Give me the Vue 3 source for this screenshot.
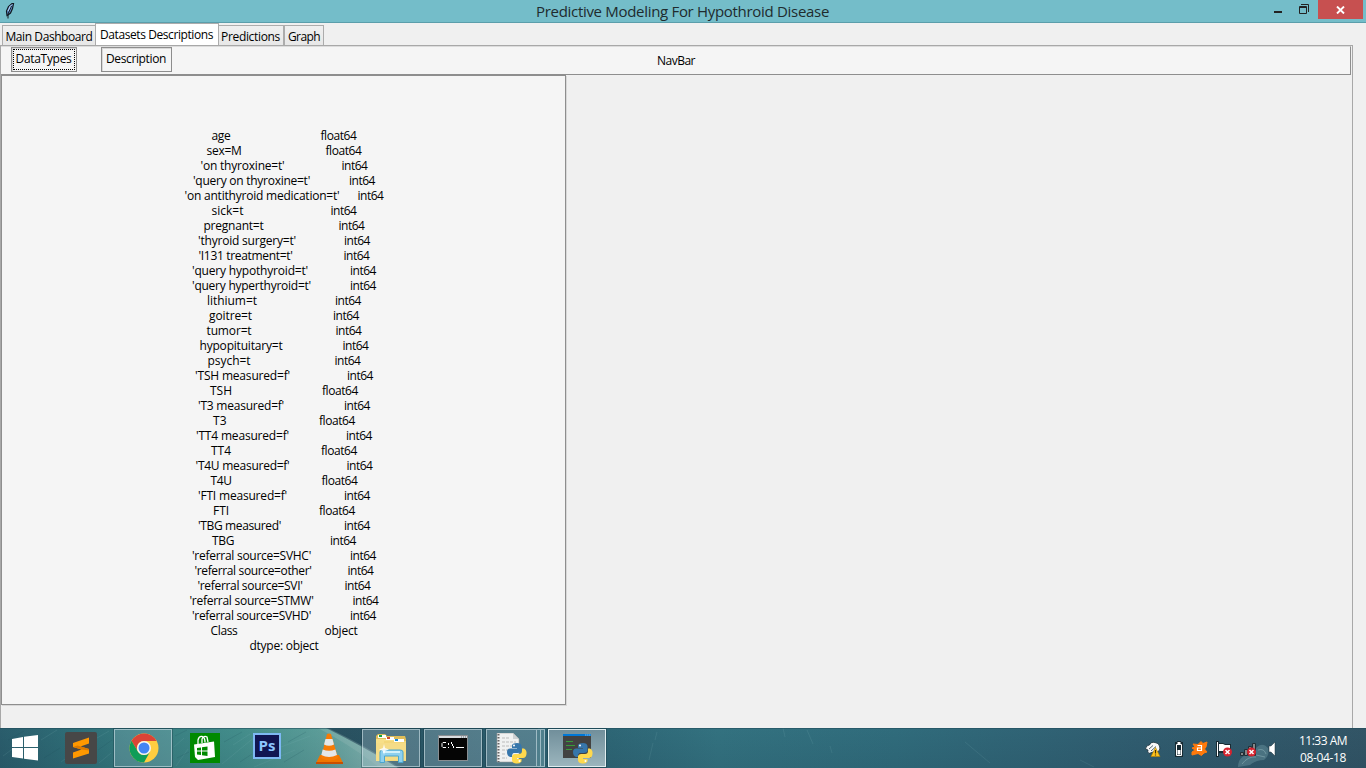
<script setup>
const rows = [
  ['age', 19, 90, 'float64'],
  ['sex=M', 35, 84, 'float64'],
  ["'on thyroxine=t'", 84, 57, 'int64'],
  ["'query on thyroxine=t'", 117, 39, 'int64'],
  ["'on antithyroid medication=t'", 155, 18, 'int64'],
  ['sick=t', 32, 87, 'int64'],
  ['pregnant=t', 60, 75, 'int64'],
  ["'thyroid surgery=t'", 98, 48, 'int64'],
  ["'I131 treatment=t'", 94, 51, 'int64'],
  ["'query hypothyroid=t'", 116, 42, 'int64'],
  ["'query hyperthyroid=t'", 119, 39, 'int64'],
  ['lithium=t', 50, 78, 'int64'],
  ['goitre=t', 43, 81, 'int64'],
  ['tumor=t', 45, 84, 'int64'],
  ['hypopituitary=t', 83, 60, 'int64'],
  ['psych=t', 43, 84, 'int64'],
  ["'TSH measured=f'", 95, 57, 'int64'],
  ['TSH', 22, 90, 'float64'],
  ["'T3 measured=f'", 86, 60, 'int64'],
  ['T3', 14, 92, 'float64'],
  ["'TT4 measured=f'", 93, 57, 'int64'],
  ['TT4', 20, 90, 'float64'],
  ["'T4U measured=f'", 94, 57, 'int64'],
  ['T4U', 21, 90, 'float64'],
  ["'FTI measured=f'", 89, 57, 'int64'],
  ['FTI', 16, 90, 'float64'],
  ["'TBG measured'", 83, 63, 'int64'],
  ['TBG', 22, 96, 'int64'],
  ["'referral source=SVHC'", 119, 39, 'int64'],
  ["'referral source=other'", 117, 36, 'int64'],
  ["'referral source=SVI'", 105, 42, 'int64'],
  ["'referral source=STMW'", 124, 39, 'int64'],
  ["'referral source=SVHD'", 119, 39, 'int64'],
  ['Class', 27, 87, 'object'],
]
const typeWidth = { int64: 26, float64: 36, object: 33 }

// Tightens letter spacing so a label fills exactly the given width.
const vFit = {
  mounted(el, { value }) {
    const natural = el.firstElementChild.getBoundingClientRect().width
    el.style.width = value + 'px'
    el.style.letterSpacing = (value - natural) / el.textContent.length + 'px'
  },
}
</script>

<template>
  <div class="screen">
    <header class="titlebar">
      <svg class="feather" width="12" height="18" viewBox="0 0 12 18">
        <path d="M3 13.500 2.500 9 4.500 4.500 8 1.500 9.500 1.500 8.500 6.500 6.500 11 4 13Z" fill="#5f91cf" stroke="#111820" stroke-width="1.200" />
        <path d="M4 16.500V12L7.500 4" fill="none" stroke="#111820" />
        <path d="M5.500 5 8 2.500M4 9 6 5" stroke="#b9d7f8" />
      </svg>
      <span v-fit="293" class="title fit"><b>Predictive Modeling For Hypothroid Disease</b></span>
      <div class="controls">
        <svg width="50" height="22" viewBox="0 0 50 22">
          <path d="M6 12h8" stroke="#222" stroke-width="2" />
          <path d="M33 4.500H40.500V12" fill="none" stroke="#222" />
          <path d="M31.500 6.500h7v7h-7zM31 7.500h8" fill="none" stroke="#222" />
        </svg>
        <div class="close">
          <svg width="9" height="8" viewBox="0 0 9 8"><path d="M1 .5 8 7.500M8 .5 1 7.500" stroke="#fff" stroke-width="1.900" /></svg>
        </div>
      </div>
    </header>

    <nav class="tabs">
      <div class="tab main"><span v-fit="87" class="fit"><b>Main Dashboard</b></span></div>
      <div class="tab active"><span v-fit="113" class="fit"><b>Datasets Descriptions</b></span></div>
      <div class="tab pred"><span v-fit="59" class="fit"><b>Predictions</b></span></div>
      <div class="tab graph"><span v-fit="32" class="fit"><b>Graph</b></span></div>
    </nav>

    <main class="notebook">
      <section class="navbar">
        <button class="btn types"><span class="focus"><span v-fit="56" class="fit"><b>DataTypes</b></span></span></button>
        <button class="btn desc"><span v-fit="60" class="fit"><b>Description</b></span></button>
        <span v-fit="38" class="fit navlabel"><b>NavBar</b></span>
      </section>
      <section class="panel">
        <div v-for="r in rows" :key="r[0]" class="row">
          <span v-fit="r[1]" class="fit"><b>{{ r[0] }}</b></span>
          <span v-fit="typeWidth[r[3]]" class="fit" :style="{ marginLeft: r[2] + 'px' }"><b>{{ r[3] }}</b></span>
        </div>
        <div class="row"><span v-fit="69" class="fit"><b>dtype: object</b></span></div>
      </section>
    </main>

    <footer class="taskbar">
      <svg class="wall" width="1366" height="40" viewBox="0 0 1366 40">
        <defs>
          <linearGradient id="sea" gradientUnits="userSpaceOnUse" x1="0" y1="0" x2="400" y2="0">
            <stop offset="0" stop-color="#2a5d6c" /><stop offset=".2" stop-color="#2f6f78" /><stop offset=".4" stop-color="#398082" /><stop offset=".6" stop-color="#438d8b" /><stop offset=".8" stop-color="#5c9d99" /><stop offset="1" stop-color="#8fbab7" />
          </linearGradient>
          <linearGradient id="deep">
            <stop offset="0" stop-color="#29505f" /><stop offset=".22" stop-color="#2b6070" /><stop offset=".38" stop-color="#337280" /><stop offset=".55" stop-color="#306c7c" /><stop offset=".78" stop-color="#305d70" /><stop offset="1" stop-color="#325566" />
          </linearGradient>
          <linearGradient id="shade" x2="0" y2="1"><stop offset="0" stop-color="#123" stop-opacity="0" /><stop offset="1" stop-color="#123" stop-opacity=".1" /></linearGradient>
        </defs>
        <rect width="1366" height="40" fill="#2b6070" />
        <rect x="320" width="1046" height="40" fill="url(#deep)" />
        <path d="M0 0H326Q370 22 398 40H0Z" fill="url(#sea)" />
        <path d="M318 0H328Q370 20 400 40H380Q352 18 318 0Z" fill="#a6c7c5" opacity=".25" />
        <g stroke="#8cc2c4" stroke-width=".7" opacity=".2">
          <path d="M3 28 22 14M41 12 57 2M61 34 95 8M99 35 111 25M97 10 109 3M176 38 188 21M174 19 184 10M222 36 256 8M233 17 250 6M254 39 295 22M281 19 310 8M653 15 649 32M655 12 657 4M783 0 785 9M807 2 813 16M830 18 832 25M965 14 990 35M1080 32 1094 39" />
        </g>
        <g stroke="#1d4f5c" stroke-width=".8" opacity=".22">
          <path d="M8 12 24 3M44 30 60 20M98 22 112 12M175 8 187 2M177 30 189 24M224 14 242 4M240 34 252 26M284 34 304 22M288 14 306 4" />
        </g>
        <rect width="1366" height="40" fill="url(#shade)" />
        <path d="M0 .5H1366" stroke="#214c5b" opacity=".55" />
        <path d="M1238 39Q1238 30 1246 27Q1252 26 1257 19Q1263 14 1268 20Q1270 27 1264 32Q1256 32 1250 37Z" fill="#8ab7bd" opacity=".3" />
        <path d="M1242 36Q1248 28 1256 29M1258 22Q1264 20 1266 26M1256 27 1265 29" fill="none" stroke="#b4d6d8" opacity=".35" />
      </svg>

      <div class="items">
        <div class="slot start">
          <svg width="27" height="26" viewBox="0 0 27 26"><path d="M0 4 11 2V12H0ZM12 1.800 26 0V12H12ZM0 13H11V23.500L0 22ZM12 13H26V25.500L12 23.700Z" fill="#fff" /></svg>
        </div>
        <div class="slot sublime">
          <svg width="32" height="32" viewBox="0 0 32 32"><rect width="32" height="32" rx="2" fill="#474747" /><path d="M8 11 24 5.500V11.500L15.500 14.500 24 17V21.500L8 26.500V20.500L16.500 17.500 8 15Z" fill="#ff9800" /><path d="M8 15 12.500 13.500 24 17V18.500L16.500 17.500Z" fill="#dc7a00" /></svg>
        </div>
        <div class="slot boxed chrome">
          <svg width="30" height="30" viewBox="0 0 30 30"><circle cx="15" cy="15" r="14.500" fill="#ffcd40" /><path d="M2.500 7.700A14.500 14.500 0 0 1 27.600 7.900H15A7 7 0 0 0 8.900 18.500Z" fill="#db4437" /><path d="M2.500 7.700A14.500 14.500 0 0 0 15 29.500L21.100 18.500A7 7 0 0 1 8.900 18.500Z" fill="#0f9d58" /><circle cx="15" cy="15" r="7" fill="#f5f5f5" /><circle cx="15" cy="15" r="5.500" fill="#4285f4" /></svg>
        </div>
        <div class="slot store">
          <svg width="30" height="30" viewBox="0 0 30 30"><rect width="30" height="30" fill="#008a00" /><path d="M4 11.500 24 8.500 25 24 8 27 5 24Z" fill="#fff" /><path d="M8 11V7Q9 3 12 3.500Q15 4 15 9.500M12 10V6Q14 2 17 4L18 9" fill="none" stroke="#fff" stroke-width="1.300" /><path d="M7 15 11 14.400V17.500H7ZM12 14.200 17.500 13.500V17.500H12ZM7 18.500H11V22L7 21.600ZM12 18.500H17.500V23L12 22.200Z" fill="#008a00" /></svg>
        </div>
        <div class="slot ps"><div class="psicon"><span v-fit="17" class="fit"><b>Ps</b></span></div></div>
        <div class="slot vlc">
          <svg width="27" height="31" viewBox="0 0 27 31"><path d="M4 22H23L27 30H0Z" fill="#ee7600" /><path d="M0 29H27V31H0Z" fill="#c94f00" /><path d="M11 1Q13 0 15 1L22 25Q14 30 5 25Z" fill="#f77b05" /><path d="M9.500 6H16.500L18 11.500Q13 14 8 11.500ZM6.700 16.500Q13 19 19.400 16.500L21 22Q13 26 5.300 22Z" fill="#e5e7e8" /></svg>
        </div>
        <div class="slot boxed explorer">
          <svg width="34" height="30" viewBox="0 0 34 30"><path d="M2 3 4 1H11L13 3H31L32 6V27H2Z" fill="#dfbd59" /><path d="M4 2H12V5H4Z" fill="#fff" /><path d="M5 2H8V4H5Z" fill="#12a53a" /><path d="M2 6H23V28H2Z" fill="#f7df88" /><path d="M12 4H20V7H12Z" fill="#fff" /><path d="M13 4H16V6H13Z" fill="#d44a2d" /><path d="M10 8H32V28H10Z" fill="#f3d779" /><path d="M20 6H30V9H20Z" fill="#fff" /><path d="M21 6H24V8H21Z" fill="#1689d5" /><path d="M2 10H32V27H2Z" fill="#f5dc87" /><path d="M6 19Q6 17 9 17H26Q29 17 29 19V29.500H24.500V23H10.500V29.500H6Z" fill="#8ed0ef" stroke="#4aa6cf" /><path d="M9 18H26V20H9Z" fill="#d3f1fb" /><path d="M10 11 11 15 15 16.500 11 18 10 22 9 18 5 16.500 9 15Z" fill="#fff" opacity=".85" /></svg>
        </div>
        <div class="slot boxed cmd">
          <svg width="30" height="26" viewBox="0 0 30 26"><rect x=".5" y=".5" width="29" height="25" fill="#050505" stroke="#888d91" /><path d="M1 2H29" stroke="#d9dcdf" stroke-width="2" /><path d="M23 2H28" stroke="#647481" stroke-dasharray="1 1" /><path d="M8 7.500H5L4 8.500V11.500L5 12.500H8M10.500 8V10M10.500 12V13M13.500 7V9M14.500 9V11M15.500 11V13M18 12.500H26" fill="none" stroke="#fff" /></svg>
        </div>
        <div class="slot boxed pyfile">
          <svg width="31" height="31" viewBox="0 0 31 31"><path d="M1 0H17L23 6V29H1Z" fill="#f0f1f1" stroke="#9a9a9a" stroke-width=".6" /><path d="M17 0V6H23" fill="#cdd1d3" /><path d="M2.500 1V29" stroke="#666" stroke-width="2" stroke-dasharray="1.500 1.500" /><path d="M6 5H14M6 9H20M6 13H19M6 17H12M6 21H10M6 25H11" stroke="#bbb" stroke-dasharray="3 1" /><g id="snake"><path d="M16 15V12Q17 10 21 10Q25 10 25.500 13V18Q25 20 22 20H18Q16 20 16 24H14Q11 23 11 19Q11 15 15 15.500H21V15Z" fill="#3776ab" /><path d="M26 15.500H28Q31 17 30.500 21Q30 25 27 25H21V26H25.500V28.500Q24 31 20 30.500Q16 30 16 27V23Q17 21 19 21H23Q26 21 26 18Z" fill="#ffd94d" /><circle cx="18" cy="12.500" r="1" fill="#fff" /><circle cx="23.500" cy="28" r="1" fill="#fff" /></g></svg>
        </div>
        <div class="stack"></div>
        <div class="stack"></div>
        <div class="slot boxed running">
          <svg width="31" height="31" viewBox="0 0 31 31"><rect x="1" y="1" width="28" height="24" fill="#424242" /><path d="M1 2H29" stroke="#0078d7" stroke-width="2" /><path d="M23 2H29" stroke="#3a9be8" stroke-width="2" stroke-dasharray="1.500 .5" /><path d="M4 8.500H11M4 12.500H13M4 16.500H10" stroke="#379b38" /><use href="#snake" /></svg>
        </div>
      </div>

      <svg class="tray" width="140" height="24" viewBox="0 0 140 24">
        <path d="M2.500 11Q3 7 6.500 7Q8 3.500 12 4.500Q16 5 16.500 8Q18 11 15 14H10L6 15.500Q4 14 5 12Z" fill="#f8f8f8" stroke="#192f39" stroke-width=".8" /><path d="M6 11 10 7.500M8 13 13 8.500" stroke="#52666d" /><path d="M12.500 9.500 17 18.500H8Z" fill="#ffc21b" stroke="#b68000" stroke-width=".6" /><path d="M12.500 12V15.500M12.500 16.500V17.500" stroke="#402f0a" stroke-width="1.200" />
        <path d="M34 3H38V4H40V19H32V4H34Z" fill="#172b33" /><path d="M33.500 6.500H38.500V17.500H33.500Z" fill="none" stroke="#fff" /><path d="M34.500 4H37.500V6H34.500ZM34.500 12H37.500V16.500H34.500Z" fill="#fff" />
        <path d="M50 6 55 6.500 58 3.500 60 5.500 64 4 63 9 61.500 11 64 14 61 15 58.500 17.500 55 15.500 49 17 49 14 52 12 49 10 52 9Z" fill="#ff7a0c" stroke="#ff7a0c" stroke-linejoin="round" /><path d="M54.500 7.500H58.500V12.500H54.500V10H58" fill="none" stroke="#fff" stroke-width="1.200" />
        <path d="M73 3H76V5H80L82 6H88V15H76V19H73Z" fill="#172b33" /><path d="M74.500 4V18" stroke="#fff" /><path d="M76 6H80L82 7H87V13H76Z" fill="#fff" /><circle cx="84.500" cy="14" r="4.500" fill="#d6232f" /><path d="M82.500 12 86.500 16M86.500 12 82.500 16" stroke="#fff" stroke-width="1.500" />
        <path d="M97.500 14.500H100.500V17.500H97.500ZM101.500 11.500H104.500V17.500H101.500ZM105.500 8.500H108.500V17.500H105.500ZM109.500 5.500H112.500V17.500H109.500Z" fill="#858789" stroke="#202f36" /><circle cx="108.500" cy="14" r="4.500" fill="#d6232f" /><path d="M106.500 12 110.500 16M110.500 12 106.500 16" stroke="#fff" stroke-width="1.500" />
        <path d="M126 8H128L132 4V18L128 14H126Z" fill="#fff" stroke="#20323a" stroke-width=".5" />
      </svg>
      <div class="clock"><span v-fit="48" class="fit"><b>11:33 AM</b></span><span v-fit="46" class="fit"><b>08-04-18</b></span></div>
    </footer>
  </div>
</template>

<style>
body { margin: 0; overflow: hidden; }
</style>

<style scoped>
* { box-sizing: border-box; }
.screen { width: 1366px; height: 768px; display: flex; flex-direction: column; background: #f0f0f0; font-family: "Open Sans", "Noto Sans", sans-serif; font-size: 12px; line-height: 15px; color: #000; }
.fit { display: inline-block; white-space: nowrap; flex: none; }
.fit b { font-weight: 400; }
.titlebar { position: relative; height: 23px; flex: none; background: #74bdc9; border-bottom: 1px solid #5b9eab; display: flex; justify-content: center; }
.feather { position: absolute; left: 4px; top: 2px; }
.title { font-size: 15px; line-height: 22px; color: #202b2e; align-self: flex-start; margin-left: -1px; }
.controls { position: absolute; right: 3px; top: 0; display: flex; }
.close { width: 45px; height: 19px; background: #c75050; display: flex; align-items: center; justify-content: center; }
.tabs { height: 22px; flex: none; display: flex; align-items: flex-end; padding-left: 2px; }
.tab { height: 20px; border: 1px solid #acacac; border-bottom: 0; background: linear-gradient(#f0f0f0, #e7e7e7); display: flex; justify-content: center; padding-top: 3px; }
.tab.main { width: 93px; border-right: 0; }
.tab.active { width: 124px; height: 22px; background: #fff; padding-right: 1px; }
.tab.pred { width: 65px; border-left: 0; padding-right: 1px; }
.tab.graph { width: 40px; }
.notebook { width: 1353px; height: 683px; border: 1px solid #a8a8a8; border-bottom: 0; background: #f0f0f0; }
.navbar { height: 29px; width: 1350px; background: #f5f5f5; border-top: 1px solid #dcdcdc; border-right: 1px solid #8e8e8e; border-bottom: 1px solid #8e8e8e; display: flex; position: relative; }
.btn { height: 25px; border: 1px solid #8d8d8d; background: #f5f5f5; box-shadow: inset 1px 1px #d8d8d8; font: inherit; padding: 0; display: flex; align-items: center; justify-content: center; }
.types { width: 66px; margin-left: 10px; }
.desc { width: 71px; margin-left: 24px; padding: 0 1px 2px 0; }
.focus { border: 1px dotted #000; width: 62px; height: 21px; display: flex; justify-content: center; line-height: 17px; padding-right: 1px; }
.navlabel { margin-left: 485px; margin-top: 6px; }
.panel { width: 565px; height: 630px; background: #f5f5f5; border: 1px solid #8e8e8e; box-shadow: 1px 1px #d8d8d8; padding-top: 52px; padding-left: 1px; }
.row { height: 15px; display: flex; justify-content: center; }
.taskbar { position: relative; height: 40px; flex: none; overflow: hidden; }
.wall { position: absolute; left: 0; top: 0; }
.items { position: relative; display: flex; align-items: stretch; height: 40px; }
.slot { display: flex; align-items: center; justify-content: center; flex: none; }
.boxed { height: 38px; margin-top: 1px; border: 1px solid rgba(205, 225, 230, .62); background: rgba(190, 213, 223, .28); outline: 1px solid rgba(20, 55, 67, .35); }
.start { width: 50px; padding-bottom: 1px; }
.sublime { width: 62px; }
.chrome { width: 58px; margin-left: 2px; padding-left: 1px; background: rgba(190, 213, 223, .2); }
.store { width: 65px; }
.ps { width: 60px; padding-bottom: 4px; }
.psicon { width: 28px; height: 26px; border: 2px solid #7db8f4; background: #101552; color: #8cc6ff; font-size: 15px; line-height: 21px; display: flex; justify-content: center; }
.psicon b { font-weight: 700; }
.vlc { width: 65px; }
.explorer { width: 58px; }
.cmd { width: 58px; margin-left: 4px; }
.pyfile { width: 51px; margin-left: 4px; }
.stack { width: 4px; height: 38px; margin-top: 1px; border: 1px solid rgba(205, 225, 230, .62); border-left: 0; background: #4f7f8c; }
.running { width: 58px; margin-left: 3px; border-color: #e0edef; background: linear-gradient(#718f9b, #9bb5bd); }
.tray { position: absolute; left: 1143px; top: 10px; }
.clock { position: absolute; right: 18px; top: 4px; width: 50px; height: 34px; display: flex; flex-direction: column; align-items: center; line-height: 17px; color: #fff; }
</style>
